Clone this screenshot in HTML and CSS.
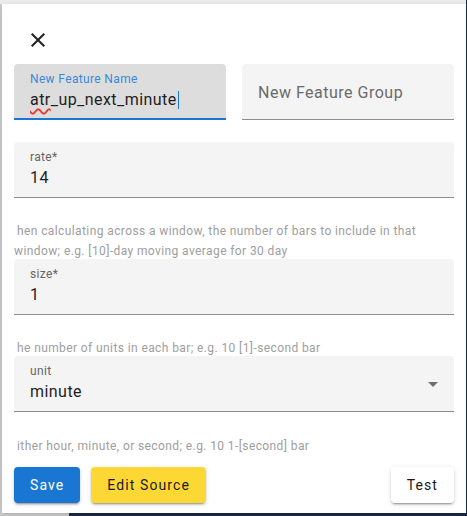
FILE: index.html
```html
<!DOCTYPE html>
<html>
<head>
<meta charset="utf-8">
<link rel="stylesheet" href="styles.css">
</head>
<body>
<div class="dialog">
  <div class="header">
    <button class="icon-btn" aria-label="close">
      <svg viewBox="0 0 24 24" width="24" height="24"><path d="M19 6.41L17.59 5 12 10.59 6.41 5 5 6.41 10.59 12 5 17.59 6.41 19 12 13.41 17.59 19 19 17.59 13.41 12z" fill="currentColor"/></svg>
    </button>
  </div>
  <div class="row-two">
    <div class="field focused">
      <div class="label label-focus">New Feature Name</div>
      <div class="value"><span class="misspelled">atr</span>_up_next_minute<span class="caret"></span></div>
    </div>
    <div class="field">
      <div class="placeholder">New Feature Group</div>
    </div>
  </div>
  <div class="field first-param">
    <div class="label">rate*</div>
    <div class="value">14</div>
  </div>
  <div class="helper">hen calculating across a window, the number of bars to include in that window; e.g. [10]-day moving average for 30 day</div>
  <div class="field after-helper">
    <div class="label">size*</div>
    <div class="value">1</div>
  </div>
  <div class="helper">he number of units in each bar; e.g. 10 [1]-second bar</div>
  <div class="field after-helper select">
    <div class="label">unit</div>
    <div class="value">minute</div>
    <svg class="arrow" viewBox="0 0 24 24" width="24" height="24"><path d="M7 10l5 5 5-5z" fill="currentColor"/></svg>
  </div>
  <div class="helper helper-last">ither hour, minute, or second; e.g. 10 1-[second] bar</div>
  <div class="actions">
    <button class="btn btn-save">Save</button>
    <button class="btn btn-edit">Edit Source</button>
    <button class="btn btn-test">Test</button>
  </div>
</div>
</body>
</html>
```
FILE: styles.css
```css
html, body {
  margin: 0;
  padding: 0;
}
body {
  width: 467px;
  height: 516px;
  overflow: hidden;
  font-family: Roboto, "Liberation Sans", sans-serif;
  background:
    linear-gradient(#1b2947, #1b2947) right top / 1px 100% no-repeat,
    linear-gradient(#1b2947, #1b2947) 69px bottom / 100% 3px no-repeat,
    linear-gradient(#ececec, #ececec) left top / 100% 4px no-repeat,
    #cdcdcd;
}
.dialog {
  box-sizing: border-box;
  width: 464px;
  height: 509px;
  margin: 4px 0 0 2px;
  padding: 12px 12px 10px 12px;
  background: #fff;
  box-shadow: 0 2px 6px rgba(0,0,0,0.15);
  display: flex;
  flex-direction: column;
}
.header {
  height: 48px;
  display: flex;
}
.icon-btn {
  width: 48px;
  height: 48px;
  padding: 12px;
  border: 0;
  background: transparent;
  color: #212121;
  display: flex;
  align-items: center;
  justify-content: center;
}
.row-two {
  display: grid;
  grid-template-columns: 1fr 1fr;
  column-gap: 16px;
}
.field {
  box-sizing: border-box;
  height: 56px;
  padding: 0 16px;
  background: #f4f4f4;
  border-radius: 4px 4px 0 0;
  border-bottom: 1px solid #8f8f8f;
  position: relative;
}
.field.focused {
  background: #dddddd;
  border-bottom: 2px solid #1976d2;
}
.label {
  margin-top: 8px;
  font-size: 12px;
  line-height: 14px;
  color: #666;
  letter-spacing: 0.35px;
}
.label-focus {
  color: #3a8ad8;
}
.value {
  margin-top: 4px;
  font-size: 16px;
  line-height: 20px;
  color: #1e1e1e;
  letter-spacing: 0.45px;
  white-space: nowrap;
}
.placeholder {
  padding-top: 19px;
  font-size: 16px;
  line-height: 20px;
  color: #6b6b6b;
  letter-spacing: 0.5px;
}
.misspelled {
  text-decoration: underline wavy #e53935;
  text-decoration-thickness: 1.5px;
  text-underline-offset: 3px;
}
.caret {
  display: inline-block;
  width: 1px;
  height: 18px;
  background: #1976d2;
  vertical-align: -4px;
  margin-left: 1px;
}
.first-param {
  margin-top: 22px;
}
.after-helper {
  margin-top: -2px;
}
.helper {
  margin-top: 23px;
  font-size: 12px;
  line-height: 20px;
  color: #9e9e9e;
  text-indent: 3px;
  letter-spacing: 0.4px;
}
.helper-last {
  margin-top: 24px;
}
.arrow {
  position: absolute;
  right: 9px;
  top: 16px;
  color: #6f6f6f;
}
.actions {
  margin-top: 11px;
  display: flex;
  gap: 11px;
}
.btn {
  height: 36px;
  padding: 0 16px;
  border: 0;
  border-radius: 4px;
  font-family: Roboto, "Liberation Sans", sans-serif;
  font-size: 14px;
  font-weight: 400;
  letter-spacing: 1.1px;
  line-height: 36px;
  box-shadow: 0 3px 1px -2px rgba(0,0,0,0.2), 0 2px 2px 0 rgba(0,0,0,0.14), 0 1px 5px 0 rgba(0,0,0,0.12);
}
.btn-save {
  background: #1976d2;
  color: #fff;
}
.btn-edit {
  background: #fdd835;
  color: #1a1a1a;
}
.btn-test {
  margin-left: auto;
  background: #fff;
  color: #1a1a1a;
}
```
